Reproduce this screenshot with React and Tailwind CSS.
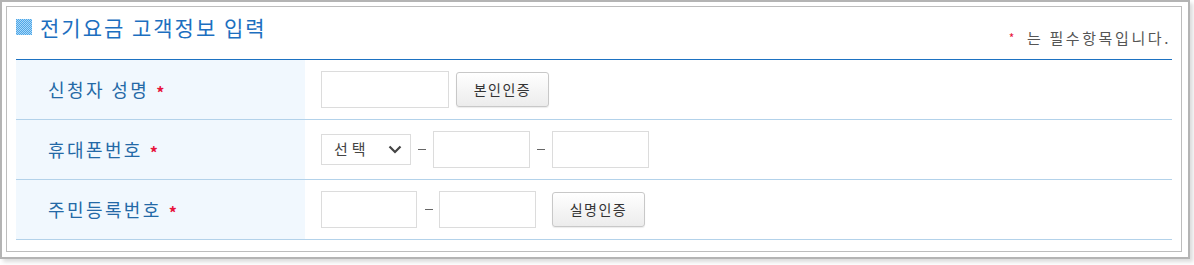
import React from "react";

const font = { fontFamily: '"Noto Sans CJK KR", "Noto Sans", sans-serif' };

function Icon() {
  return (
    <svg width="16" height="16" viewBox="0 0 16 16" className="block">
      <defs>
        <pattern id="chk" width="2" height="2" patternUnits="userSpaceOnUse">
          <rect width="2" height="2" fill="#a9d8f7" />
          <rect width="1" height="1" fill="#4ea6e8" />
          <rect x="1" y="1" width="1" height="1" fill="#4ea6e8" />
        </pattern>
      </defs>
      <rect width="16" height="16" fill="url(#chk)" />
    </svg>
  );
}

function Star() {
  return <span className="text-[#e8143c] text-[16px] font-bold leading-none ml-[7px] mt-[5px]">*</span>;
}

function Dash() {
  return <div className="w-[8px] h-px bg-[#666]" />;
}

function Btn({ children, className = "" }) {
  return (
    <button
      className={
        "h-[35px] w-[93px] rounded-[3px] border border-[#c8c8c8] bg-gradient-to-b from-[#ffffff] to-[#ececec] text-[14px] tracking-[1.5px] text-[#333] shadow-[0_1px_1px_rgba(0,0,0,0.08)] " +
        className
      }
      style={font}
    >
      {children}
    </button>
  );
}

function Input({ w }) {
  return <div className={"h-[37px] border border-[#dcdcdc] bg-white " + w} />;
}

function Row({ label, children }) {
  return (
    <div className="flex h-[60px] border-b border-[#b3d2ea]">
      <div className="w-[289px] bg-[#f1f8fe] flex items-center pl-[32px]">
        <span className="text-[18px] tracking-[2.4px] text-[#2469a6] font-normal" style={font}>
          {label}
        </span>
        <Star />
      </div>
      <div className="flex-1 flex items-center pl-[16px]">{children}</div>
    </div>
  );
}

export default function App() {
  return (
    <div className="w-[1194px] h-[265px] bg-white" style={font}>
      <div className="w-[1190px] h-[259px] border-2 border-[#b4b4b4] pt-1 pl-1 pr-[6px] pb-[5px] shadow-[3px_3px_4px_rgba(0,0,0,0.14)] bg-white">
        <div className="h-full border border-[#bdbdbd] px-[9px]">
          <div className="h-[52px] flex justify-between">
            <div className="flex items-center pt-[6px] self-start">
              <Icon />
              <span className="ml-[8px] text-[21px] tracking-[2px] text-[#1d6fc0] leading-[28px] font-normal">
                전기요금 고객정보 입력
              </span>
            </div>
            <div className="self-end pb-[10px] pr-[1px] flex items-center text-[15px] tracking-[2.6px] text-[#555]">
              <span className="text-[#e8143c] text-[12px] mr-[10px]">*</span>
              는 필수항목입니다.
            </div>
          </div>
          <div className="border-t border-[#1d72c2]">
            <Row label="신청자 성명">
              <Input w="w-[128px]" />
              <Btn className="ml-[7px]">본인인증</Btn>
            </Row>
            <Row label="휴대폰번호">
              <div className="h-[31px] w-[90px] border border-[#dcdcdc] flex items-center justify-between pl-[12px] pr-[8px] bg-white">
                <span className="text-[15px] tracking-[4px] text-[#444]">선택</span>
                <svg width="14" height="9" viewBox="0 0 14 9">
                  <path d="M1.5 1.5 L7 7 L12.5 1.5" fill="none" stroke="#444" strokeWidth="2.2" />
                </svg>
              </div>
              <div className="mx-[7px]"><Dash /></div>
              <Input w="w-[97px]" />
              <div className="mx-[7px]"><Dash /></div>
              <Input w="w-[97px]" />
            </Row>
            <Row label="주민등록번호">
              <Input w="w-[96px]" />
              <div className="ml-[8px] mr-[6px]"><Dash /></div>
              <Input w="w-[97px]" />
              <Btn className="ml-[16px] w-[92px]">실명인증</Btn>
            </Row>
          </div>
        </div>
      </div>
    </div>
  );
}
